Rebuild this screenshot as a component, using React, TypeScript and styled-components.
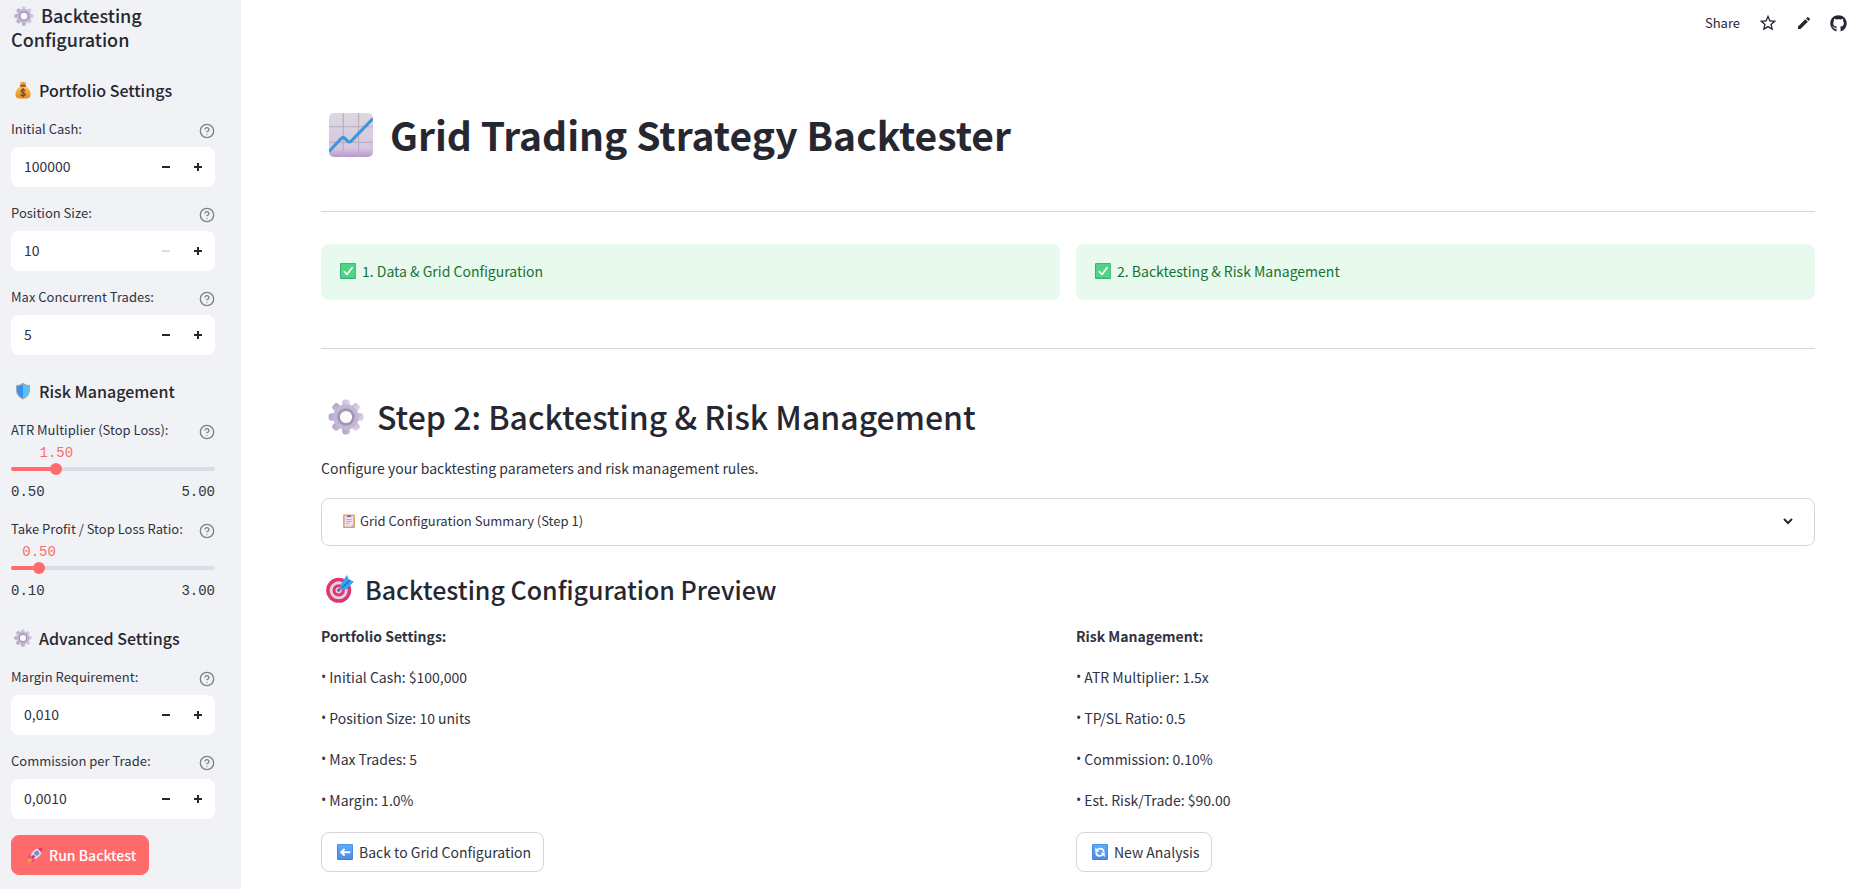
import React, { useId, useState } from 'react';
import styled, { createGlobalStyle, css } from 'styled-components';
import { MdEdit, MdStarBorder } from 'react-icons/md';
import { FaGithub } from 'react-icons/fa';

const color = {
  text: '#262730',
  body: '#31333f',
  muted: '#7d7f88',
  line: '#d4d5d8',
  track: '#d9dde8',
  sidebar: '#f0f2f6',
  accent: '#ff6b6b',
  successBg: '#e8f9ee',
  successText: '#177233',
};

const GlobalStyle = createGlobalStyle`
  *, *::before, *::after { box-sizing: border-box; }
  body {
    margin: 0;
    background: #fff;
    color: ${color.body};
    font-family: "Noto Sans CJK SC", "Open Sans", sans-serif;
    font-size: 14px;
    line-height: 26px;
  }
  h1, h2, h3, h4, p, ul { margin: 0; padding: 0; }
  button, input { font: inherit; color: inherit; }
  button { cursor: pointer; }
`;

/* ---------- pictograms ---------- */

type EmojiName =
  | 'gear' | 'bag' | 'shield' | 'rocket' | 'chart'
  | 'check' | 'clipboard' | 'target' | 'back' | 'refresh';

const EmojiSvg = styled.svg<{ $size: number; $before: number; $after: number }>`
  flex: none;
  width: ${(p) => p.$size}px;
  height: ${(p) => p.$size}px;
  margin: 0 ${(p) => p.$after}px 0 ${(p) => p.$before}px;
  vertical-align: -3px;
`;

function drawEmoji(name: EmojiName, id: string) {
  switch (name) {
    case 'gear':
      return (
        <>
          <defs>
            <linearGradient id={id} x1="0.8" y1="0" x2="0.2" y2="1">
              <stop offset="0" stopColor="#d9d3e6" />
              <stop offset="1" stopColor="#b5a5cb" />
            </linearGradient>
          </defs>
          {[0, 45, 90, 135].map((a) => (
            <rect key={a} x="12.6" y="0.5" width="6.8" height="31" rx="2.8" fill={`url(#${id})`} transform={`rotate(${a} 16 16)`} />
          ))}
          <circle cx="16" cy="16" r="8.6" fill="none" stroke="#c3b7d5" strokeWidth="5.6" />
          <circle cx="16" cy="16" r="6.6" fill="none" stroke="#a095b3" strokeWidth="2.4" />
          <circle cx="16" cy="16" r="5.4" fill="#fbfafd" />
        </>
      );
    case 'bag':
      return (
        <>
          <defs>
            <linearGradient id={id} x1="0" y1="0" x2="0" y2="1">
              <stop offset="0" stopColor="#ffc83d" />
              <stop offset="1" stopColor="#ea8a25" />
            </linearGradient>
          </defs>
          <path d="M11 1.5q2.500 2 5 0q2.500 2 5 0l-1 6h-8z" fill="#f0992b" />
          <path d="M12 9C6 13 2.500 18 2.500 24c0 5 3 7 7 7h13c4 0 7-2 7-7 0-6-3.500-11-9.500-15z" fill={`url(#${id})`} />
          <rect x="10.500" y="6.500" width="11" height="3.500" rx="1.700" fill="#8f5a33" />
          <path d="M19.500 17.500c-.7-1.500-2-2-3.500-2-2 0-3.500 1-3.500 2.700 0 3.800 7.300 1.900 7.300 5.400 0 1.800-1.700 2.800-3.800 2.800-1.800 0-3.200-.8-3.800-2.300M16 13.300v15.200" fill="none" stroke="#6b4a35" strokeWidth="2.200" strokeLinecap="round" />
        </>
      );
    case 'shield':
      return (
        <>
          <path d="M16 1.500C12.500 4.500 8 5.500 3.500 5.500V14c0 8.500 5.500 13.500 12.500 17 7-3.500 12.500-8.500 12.500-17V5.500C24 5.500 19.500 4.500 16 1.500z" fill="#a3a9b5" />
          <path d="M16 4C12.700 6.500 9 7.300 5.500 7.400V14c0 7.200 4.500 11.500 10.500 14.700z" fill="#3a8ff0" />
          <path d="M16 4c3.300 2.500 7 3.300 10.500 3.400V14c0 7.200-4.500 11.500-10.500 14.700z" fill="#56c2fb" />
        </>
      );
    case 'rocket':
      return (
        <>
          <path d="M8.500 14.500 3.500 18c-1.300 1.500-.8 4 1.300 4.200l5-1.200zM17.500 23.500 14 28.500c-1.500 1.300-4 .8-4.200-1.300l1.200-5z" fill="#e2366f" />
          <path d="M5.500 22.500C2.500 24 1.500 28 1.500 30.500c2.500 0 6.500-1 8-4z" fill="#f5a23a" />
          <path d="M30 2c-8-1-14 2-18 7-2.500 3.200-4.500 7-5.500 11l5.500 5.500c4-1 7.800-3 11-5.500 5-4 8-10 7-18z" fill="#ddd3e8" />
          <path d="M30 2c-3.200-.4-6.200-.1-8.800.8l8 8C30.100 8.200 30.400 5.200 30 2z" fill="#e2366f" />
          <circle cx="19.500" cy="12.500" r="4.600" fill="#8874a6" />
          <circle cx="19.500" cy="12.500" r="3.200" fill="#42a5f5" />
          <path d="m7 20 6-4.500 3.500 3.500-4.500 6z" fill="#d63668" />
        </>
      );
    case 'chart':
      return (
        <>
          <defs>
            <linearGradient id={id} x1="0" y1="0" x2="0" y2="1">
              <stop offset="0" stopColor="#dcd8df" />
              <stop offset="0.800" stopColor="#d5c6e2" />
              <stop offset="1" stopColor="#b79acb" />
            </linearGradient>
            <clipPath id={`${id}c`}><rect width="32" height="32" rx="3.500" /></clipPath>
          </defs>
          <g clipPath={`url(#${id}c)`}>
            <rect width="32" height="32" fill={`url(#${id})`} />
            <path d="M10.500 0v32M21.500 0v32M0 10h32M0 21.300h32" stroke="#b9b1c0" strokeWidth="0.900" />
            <path d="m0 28 9-9.500q1.300-1.200 2.600 0l1.900 1.900q1.300 1.200 2.600 0L32 4" fill="none" stroke="#3c96de" strokeWidth="2.200" />
          </g>
        </>
      );
    case 'check':
      return (
        <>
          <rect width="32" height="32" rx="2.500" fill="#3fae73" />
          <rect x="2" y="1.500" width="29" height="28" rx="2" fill="#51d487" />
          <path d="m8.500 17 5.500 6L24.500 9" fill="none" stroke="#fff" strokeWidth="3" strokeLinecap="round" strokeLinejoin="round" />
        </>
      );
    case 'clipboard':
      return (
        <>
          <rect x="2.500" y="1" width="27" height="31" rx="2.500" fill="#e09a67" />
          <rect x="6" y="4" width="20" height="25" fill="#eae2f2" />
          <path d="M20.500 29 26 23.500V29z" fill="#b7a3cf" />
          <path d="M11 7V4h2.500a2.600 2.600 0 0 1 5 0H21v3z" fill="#716580" />
          <path d="M9.500 12.500h13M9.500 17h13M9.500 21.500h8" stroke="#ab9fbb" strokeWidth="1.700" />
        </>
      );
    case 'target':
      return (
        <>
          <circle cx="14.500" cy="17.500" r="14.300" fill="#e0366c" />
          <circle cx="14.500" cy="17.500" r="10.300" fill="#e6cfe6" />
          <circle cx="14.500" cy="17.500" r="7" fill="#e0366c" />
          <circle cx="14.500" cy="17.500" r="3.600" fill="#e6cfe6" />
          <circle cx="14.500" cy="17.500" r="1.700" fill="#a3285c" />
          <path d="M14.500 17.500 22 10" stroke="#7b5f92" strokeWidth="1.800" strokeLinecap="round" />
          <path d="m16.500 11 7.500-11 2 5.500 6 2L23 16.500l-6 .7z" fill="#36a3f2" />
          <path d="m18.500 14.500 9-9" stroke="#1d70c9" strokeWidth="1.500" />
        </>
      );
    case 'back':
    case 'refresh':
      return (
        <>
          <defs>
            <linearGradient id={id} x1="0" y1="0" x2="0" y2="1">
              <stop offset="0" stopColor="#5aaefc" />
              <stop offset="1" stopColor="#4c8cec" />
            </linearGradient>
          </defs>
          <rect width="32" height="32" rx="2.500" fill="#4279dc" />
          <rect x="1.500" y="1" width="29.500" height="29" rx="2" fill={`url(#${id})`} />
          {name === 'back' ? (
            <path d="M25 16.500H9M14 11l-5.500 5.500L14 22" fill="none" stroke="#fff" strokeWidth="3.800" strokeLinecap="round" strokeLinejoin="round" />
          ) : (
            <>
              <path d="M10 12.500C14 7.500 22.500 8.500 23.500 15M22 20.500C18 25.500 9.500 24.500 8.500 18" fill="none" stroke="#fff" strokeWidth="3.600" strokeLinecap="round" />
              <path d="M6.500 7v8.500H15zM25.500 26v-8.500H17z" fill="#fff" />
            </>
          )}
        </>
      );
  }
}

function Emoji({ name, size, before = 3, after = 7 }: { name: EmojiName; size: number; before?: number; after?: number }) {
  const id = useId().replace(/[^a-zA-Z0-9]/g, '');
  return (
    <EmojiSvg viewBox="0 0 32 32" $size={size} $before={before} $after={after} aria-hidden="true">
      {drawEmoji(name, id)}
    </EmojiSvg>
  );
}

/* ---------- sidebar ---------- */

const Shell = styled.div`
  display: flex;
  min-height: 100vh;
`;

const Sidebar = styled.aside`
  flex: none;
  width: 241px;
  padding: 3px 26px 14px 11px;
  background: ${color.sidebar};
`;

const SidebarForm = styled.form`
  display: flex;
  flex-direction: column;
  gap: 16px;
`;

const SidebarTitle = styled.h2`
  padding-bottom: 3px;
  color: ${color.text};
  font-size: 18px;
  font-weight: 500;
  line-height: 24px;
`;

const SidebarHeading = styled.h3`
  display: flex;
  align-items: center;
  padding: 8px 0 1px;
  color: ${color.text};
  font-size: 16px;
  font-weight: 500;
  line-height: 24px;
`;

const Field = styled.div`
  display: flex;
  flex-direction: column;
`;

const FieldHead = styled.div`
  display: flex;
  align-items: center;
  justify-content: space-between;
  height: 24px;
`;

const FieldLabel = styled.label`
  align-self: flex-start;
  font-size: 13px;
  line-height: 20px;
  white-space: nowrap;
`;

const HelpButton = styled.button`
  display: flex;
  padding: 0;
  border: 0;
  background: none;
  color: ${color.muted};
`;

const NumberBox = styled.div`
  display: flex;
  height: 40px;
  margin-top: 4px;
  padding-right: 1px;
  overflow: hidden;
  border-radius: 8px;
  background: #fff;
`;

const NumberInput = styled.input`
  flex: 1;
  min-width: 0;
  padding: 0 0 3px 13px;
  border: 0;
  outline: 0;
  background: transparent;
  font-size: 14px;
`;

const StepButton = styled.button`
  display: flex;
  align-items: center;
  justify-content: center;
  width: 32px;
  padding: 0;
  border: 0;
  background: transparent;
  color: ${color.text};
  &:disabled { color: ${color.track}; cursor: default; }
`;

const SliderField = styled(Field)`
  height: 83px;
`;

const SliderValue = styled.output`
  align-self: flex-start;
  transform: translateX(-50%);
  color: ${color.accent};
  font-family: "Liberation Mono", monospace;
  font-size: 14px;
  line-height: 18px;
`;

const SliderTrack = styled.div`
  display: flex;
  align-items: center;
  height: 4px;
  margin-top: 5px;
  border-radius: 2px;
`;

const thumb = css`
  appearance: none;
  width: 12px;
  height: 12px;
  border: 0;
  border-radius: 50%;
  background: ${color.accent};
`;

const SliderInput = styled.input`
  appearance: none;
  flex: none;
  width: calc(100% + 12px);
  height: 12px;
  margin: 0 -6px;
  background: transparent;
  outline: 0;
  &::-webkit-slider-thumb { ${thumb} }
  &::-moz-range-thumb { ${thumb} }
`;

const SliderEnds = styled.div`
  display: flex;
  justify-content: space-between;
  margin-top: 11px;
  font-family: "Liberation Mono", monospace;
  font-size: 14px;
  line-height: 20px;
`;

const Button = styled.button<{ $primary?: boolean }>`
  display: flex;
  align-items: center;
  align-self: flex-start;
  justify-self: start;
  height: 40px;
  padding: 0 12px 1px;
  border: 1px solid ${(p) => (p.$primary ? color.accent : color.line)};
  border-radius: 8px;
  background: ${(p) => (p.$primary ? color.accent : '#fff')};
  color: ${(p) => (p.$primary ? '#fff' : color.body)};
  font-weight: ${(p) => (p.$primary ? 500 : 400)};
  white-space: nowrap;
`;

function Help({ topic }: { topic: string }) {
  return (
    <HelpButton type="button" aria-label={`Help for ${topic}`}>
      <svg width="16" height="16" viewBox="0 0 24 24" fill="none" stroke="currentColor" strokeWidth="2" strokeLinecap="round" strokeLinejoin="round">
        <circle cx="12" cy="12" r="10" />
        <path d="M9.090 9a3 3 0 0 1 5.830 1c0 2-3 3-3 3M12 17h.01" />
      </svg>
    </HelpButton>
  );
}

interface NumberFieldProps { label: string; initial: string; step: number; min: number; digits?: number }

function NumberField({ label, initial, step, min, digits = 0 }: NumberFieldProps) {
  const id = useId();
  const [value, setValue] = useState(initial);
  const num = Number(value.replace(',', '.'));
  const change = (d: number) => setValue(Math.max(min, num + d).toFixed(digits).replace('.', ','));
  return (
    <Field>
      <FieldHead>
        <FieldLabel htmlFor={id}>{label}:</FieldLabel>
        <Help topic={label} />
      </FieldHead>
      <NumberBox>
        <NumberInput id={id} inputMode="decimal" value={value} onChange={(e) => setValue(e.target.value)} />
        <StepButton type="button" aria-label={`Decrease ${label}`} disabled={num <= min} onClick={() => change(-step)}>
          <svg width="8" height="8" viewBox="0 0 8 8" fill="currentColor"><path d="M0 3h8v2H0z" /></svg>
        </StepButton>
        <StepButton type="button" aria-label={`Increase ${label}`} onClick={() => change(step)}>
          <svg width="8" height="8" viewBox="0 0 8 8" fill="currentColor"><path d="M3 0h2v3h3v2H5v3H3V5H0V3h3z" /></svg>
        </StepButton>
      </NumberBox>
    </Field>
  );
}

function SliderControl({ label, min, max, initial }: { label: string; min: number; max: number; initial: number }) {
  const id = useId();
  const [value, setValue] = useState(initial);
  const pct = ((value - min) / (max - min)) * 100;
  return (
    <SliderField>
      <FieldHead>
        <FieldLabel htmlFor={id}>{label}:</FieldLabel>
        <Help topic={label} />
      </FieldHead>
      <SliderValue htmlFor={id} style={{ marginLeft: `${pct}%` }}>{value.toFixed(2)}</SliderValue>
      <SliderTrack style={{ background: `linear-gradient(to right, ${color.accent} ${pct}%, ${color.track} ${pct}%)` }}>
        <SliderInput id={id} type="range" min={min} max={max} step={0.1} value={value} onChange={(e) => setValue(Number(e.target.value))} />
      </SliderTrack>
      <SliderEnds>
        <span>{min.toFixed(2)}</span>
        <span>{max.toFixed(2)}</span>
      </SliderEnds>
    </SliderField>
  );
}

/* ---------- main area ---------- */

const Main = styled.main`
  flex: 1;
  min-width: 0;
`;

const Toolbar = styled.header`
  display: flex;
  align-items: center;
  justify-content: flex-end;
  gap: 18px;
  height: 46px;
  padding-right: 15px;
`;

const toolItem = css`
  display: flex;
  padding: 0;
  border: 0;
  background: none;
  color: ${color.text};
  font-size: 13px;
`;

const ToolButton = styled.button`${toolItem}`;

const ToolLink = styled.a`${toolItem}`;

const Content = styled.div`
  display: flex;
  flex-direction: column;
  padding: 62px 47px 16px 80px;
`;

const PageTitle = styled.h1`
  display: flex;
  align-items: center;
  color: ${color.text};
  font-size: 39px;
  font-weight: 700;
  line-height: 52px;
  svg { margin-top: 2px; }
`;

const Rule = styled.hr<{ $top: number; $bottom: number }>`
  width: 100%;
  height: 1px;
  margin: ${(p) => p.$top}px 0 ${(p) => p.$bottom}px;
  border: 0;
  background: ${color.line};
`;

const Columns = styled.div`
  display: grid;
  grid-template-columns: 1fr 1fr;
  gap: 16px;
`;

const Success = styled.div`
  display: flex;
  align-items: center;
  height: 56px;
  padding: 0 16px 2px;
  border-radius: 8px;
  background: ${color.successBg};
  color: ${color.successText};
`;

const StepTitle = styled.h2`
  display: flex;
  align-items: center;
  margin-bottom: 20px;
  color: ${color.text};
  font-size: 32px;
  font-weight: 500;
  line-height: 38px;
  svg { margin-top: 2px; }
`;

const Expander = styled.button`
  display: flex;
  align-items: center;
  width: 100%;
  height: 48px;
  margin: 17px 0 28px;
  padding: 0 18px 2px 17px;
  border: 1px solid ${color.line};
  border-radius: 8px;
  background: #fff;
  font-size: 13px;
  text-align: left;
  svg:last-child { margin-left: auto; }
`;

const PreviewTitle = styled.h3`
  display: flex;
  align-items: center;
  margin-bottom: 19px;
  color: ${color.text};
  font-size: 25px;
  font-weight: 500;
  line-height: 30px;
`;

const Summary = styled.section`
  display: flex;
  flex-direction: column;
  gap: 15px;
  padding-bottom: 19px;
`;

const SummaryTitle = styled.h4`
  font-size: 14px;
  font-weight: 700;
  line-height: 26px;
`;

const SummaryRow = styled.p`
  display: flex;
  gap: 3px;
`;

const Bullet = styled.span`
  font-family: "Open Sans", sans-serif;
`;

const previews = [
  { title: 'Portfolio Settings:', rows: ['Initial Cash: $100,000', 'Position Size: 10 units', 'Max Trades: 5', 'Margin: 1.0%'] },
  { title: 'Risk Management:', rows: ['ATR Multiplier: 1.5x', 'TP/SL Ratio: 0.5', 'Commission: 0.10%', 'Est. Risk/Trade: $90.00'] },
];

export default function App() {
  return (
    <>
      <GlobalStyle />
      <Shell>
        <Sidebar>
          <SidebarForm onSubmit={(e) => e.preventDefault()}>
            <SidebarTitle><Emoji name="gear" size={20} />Backtesting Configuration</SidebarTitle>

            <SidebarHeading><Emoji name="bag" size={18} />Portfolio Settings</SidebarHeading>
            <NumberField label="Initial Cash" initial="100000" step={1000} min={1000} />
            <NumberField label="Position Size" initial="10" step={1} min={10} />
            <NumberField label="Max Concurrent Trades" initial="5" step={1} min={1} />

            <SidebarHeading><Emoji name="shield" size={18} />Risk Management</SidebarHeading>
            <SliderControl label="ATR Multiplier (Stop Loss)" min={0.5} max={5} initial={1.5} />
            <SliderControl label="Take Profit / Stop Loss Ratio" min={0.1} max={3} initial={0.5} />

            <SidebarHeading><Emoji name="gear" size={18} />Advanced Settings</SidebarHeading>
            <NumberField label="Margin Requirement" initial="0,010" step={0.001} min={0.001} digits={3} />
            <NumberField label="Commission per Trade" initial="0,0010" step={0.0001} min={0} digits={4} />
            <Button type="submit" $primary><Emoji name="rocket" size={16} after={6} />Run Backtest</Button>
          </SidebarForm>
        </Sidebar>

        <Main>
          <Toolbar>
            <ToolButton type="button">Share</ToolButton>
            <ToolButton type="button" aria-label="Favorite"><MdStarBorder size={20} /></ToolButton>
            <ToolButton type="button" aria-label="Edit"><MdEdit size={16} /></ToolButton>
            <ToolLink href="#source" aria-label="View source on GitHub"><FaGithub size={17} /></ToolLink>
          </Toolbar>

          <Content>
            <PageTitle><Emoji name="chart" size={44} before={8} after={17} />Grid Trading Strategy Backtester</PageTitle>
            <Rule $top={51} $bottom={32} />
            <Columns>
              <Success><Emoji name="check" size={16} after={6} />1. Data &amp; Grid Configuration</Success>
              <Success><Emoji name="check" size={16} after={6} />2. Backtesting &amp; Risk Management</Success>
            </Columns>
            <Rule $top={48} $bottom={48} />

            <StepTitle><Emoji name="gear" size={36} before={7} after={13} />Step 2: Backtesting &amp; Risk Management</StepTitle>
            <p>Configure your backtesting parameters and risk management rules.</p>
            <Expander type="button" aria-expanded="false">
              <Emoji name="clipboard" size={14} after={4} />
              Grid Configuration Summary (Step 1)
              <svg width="16" height="16" viewBox="0 0 16 16" fill="none" stroke={color.text} strokeWidth="2" aria-hidden="true">
                <path d="m4 6 4 4 4-4" />
              </svg>
            </Expander>

            <PreviewTitle><Emoji name="target" size={28} before={5} after={11} />Backtesting Configuration Preview</PreviewTitle>
            <Columns>
              {previews.map((group) => (
                <Summary key={group.title}>
                  <SummaryTitle>{group.title}</SummaryTitle>
                  {group.rows.map((row) => <SummaryRow key={row}><Bullet>•</Bullet>{row}</SummaryRow>)}
                </Summary>
              ))}
            </Columns>
            <Columns>
              <Button type="button"><Emoji name="back" size={16} after={6} />Back to Grid Configuration</Button>
              <Button type="button"><Emoji name="refresh" size={16} after={6} />New Analysis</Button>
            </Columns>
          </Content>
        </Main>
      </Shell>
    </>
  );
}
